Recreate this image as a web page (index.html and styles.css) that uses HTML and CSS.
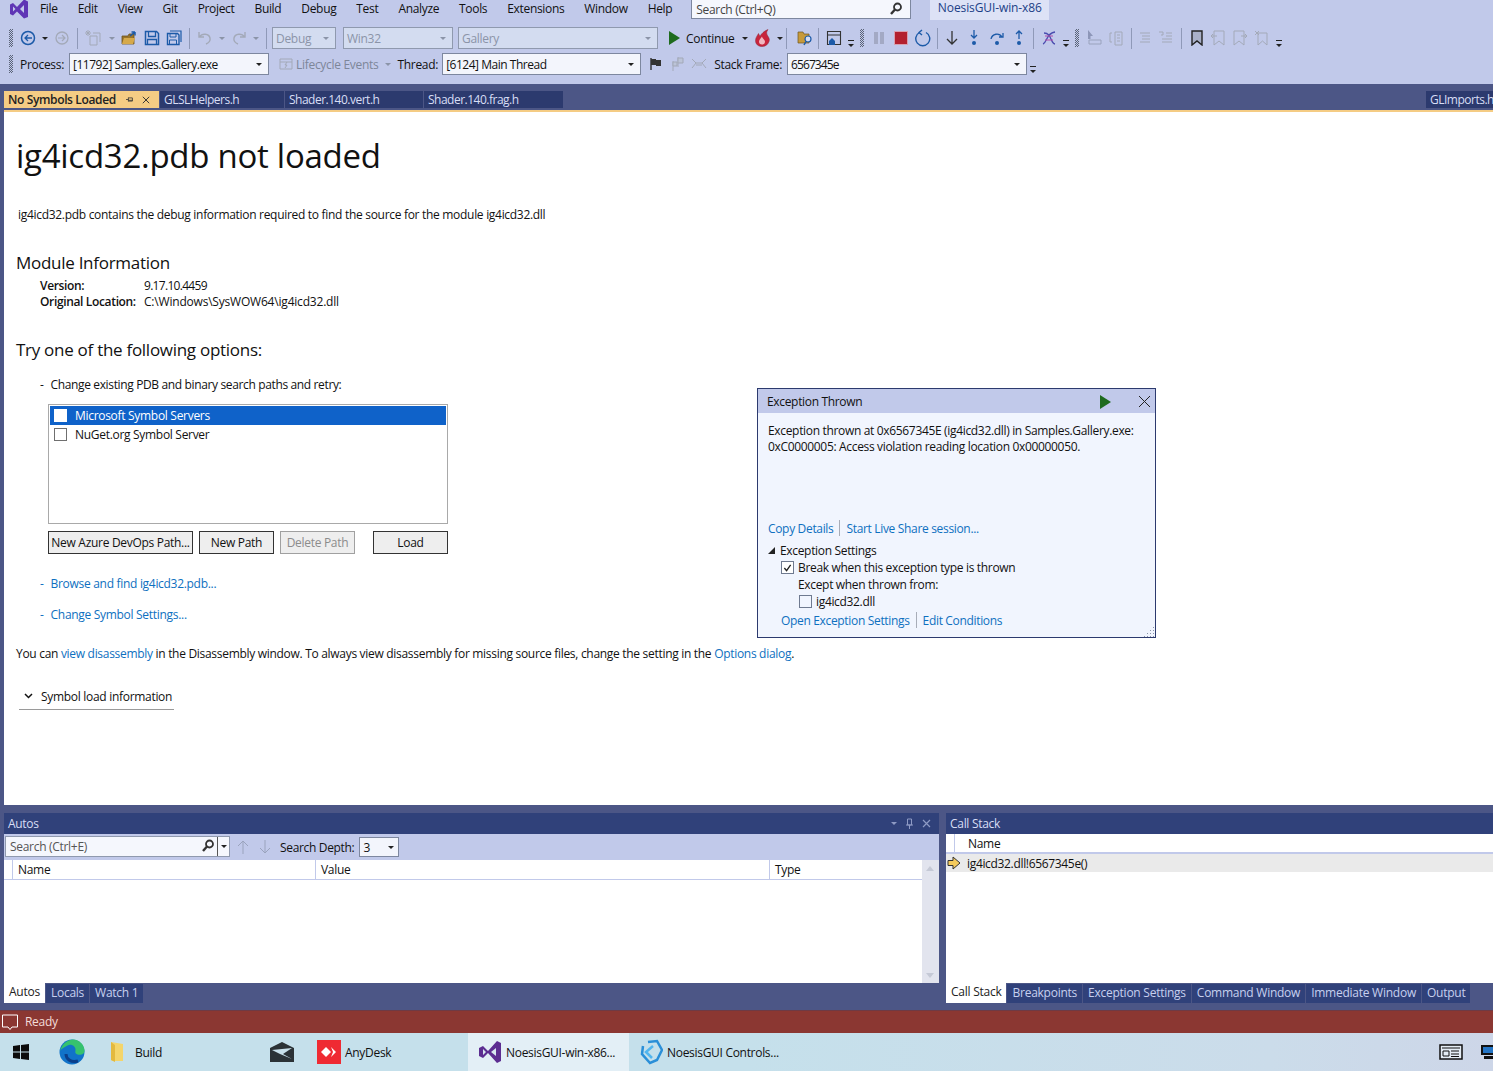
FILE: index.html
```html
<!DOCTYPE html>
<html lang="en">
<head>
  <meta charset="UTF-8" />
  <title>NoesisGUI-win-x86</title>
  <link rel="stylesheet" href="styles.css">
</head>
<body>
  <!-- Menu bar -->
  <div class="menubar">
    <svg class="vs-logo" width="20" height="20" viewBox="0 0 20 20"><path d="M1 5.500l3-1.500 4 4 7-7.500 4 2v15.500l-4 1.500-7-7-4 4-3-1.500z" fill="#5f35b5"/><path d="M4 7.500v5l2.500-2.500zM15 6l-4 4 4 4z" fill="#c1c9ea"/></svg>
    <span class="menu-item">File</span><span class="menu-item">Edit</span><span class="menu-item">View</span><span class="menu-item">Git</span><span class="menu-item">Project</span><span class="menu-item">Build</span><span class="menu-item">Debug</span><span class="menu-item">Test</span><span class="menu-item">Analyze</span><span class="menu-item">Tools</span><span class="menu-item">Extensions</span><span class="menu-item">Window</span><span class="menu-item">Help</span>
    <div class="quick-search"><span>Search (Ctrl+Q)</span>
      <svg width="14" height="14" viewBox="0 0 14 14"><circle cx="8.500" cy="5" r="3.500" fill="none" stroke="#333" stroke-width="1.800"/><path d="M6 7.500L2 12" stroke="#333" stroke-width="2.400"/></svg>
    </div>
    <div class="solution-name">NoesisGUI-win-x86</div>
  </div>

  <!-- Standard toolbar -->
  <div class="toolbar tb-top">
    <i class="grip"></i>
    <svg class="ic" width="16" height="16" viewBox="0 0 16 16"><circle cx="8" cy="8" r="6.500" fill="none" stroke="#1c5aa8" stroke-width="1.500"/><path d="M12 8H5M8 5L5 8l3 3" fill="none" stroke="#1c5aa8" stroke-width="1.300"/></svg>
    <i class="caret c-dark"></i>
    <svg class="ic" width="16" height="16" viewBox="0 0 16 16"><circle cx="8" cy="8" r="6" fill="none" stroke="#a3a9b8" stroke-width="1.300"/><path d="M4 8h7M8 5l3 3-3 3" fill="none" stroke="#a3a9b8" stroke-width="1.200"/></svg>
    <i class="sep"></i>
    <svg class="ic" width="18" height="18" viewBox="0 0 18 18"><path d="M5 7h7v9H5zM8 4h7v9" fill="none" stroke="#a3a9b8"/><path d="M3 1v6M0 4h6M1 2l4 4M5 2L1 6" stroke="#a3a9b8"/></svg>
    <i class="caret c-grey"></i>
    <svg class="ic" width="17" height="16" viewBox="0 0 17 16"><path d="M1 6h6l1-2h5v10H1z" fill="#9a7428" stroke="#6d5320" stroke-width=".8"/><path d="M1 14l2-6h11l-2 6z" fill="#d6a94a"/><path d="M9 6l5-4M14 2v3.500M14 2h-3.500" stroke="#1c5aa8" stroke-width="1.500" fill="none"/></svg>
    <svg class="ic" width="16" height="16" viewBox="0 0 16 16"><path d="M1.500 1.500h11l2 2v11h-13z" fill="none" stroke="#1c5aa8" stroke-width="1.500"/><path d="M4.500 2v4.500h7V2M3.500 14V9.500h9V14" fill="none" stroke="#1c5aa8" stroke-width="1.300"/></svg>
    <svg class="ic" width="16" height="16" viewBox="0 0 16 16"><path d="M4 1h11v11" fill="none" stroke="#1c5aa8" stroke-width="1.200"/><path d="M1.500 3.500h10l1.500 1.500v9.500H1.500z" fill="none" stroke="#1c5aa8" stroke-width="1.400"/><path d="M4 4v3h6V4M3.500 14v-4h7v4" fill="none" stroke="#1c5aa8"/></svg>
    <i class="sep"></i>
    <svg class="ic" width="16" height="16" viewBox="0 0 16 16"><path d="M2 2v5h5M2.500 7C5 3 12 3.500 13 8c.6 3-1.500 5-4 6" fill="none" stroke="#a3a9b8" stroke-width="1.400"/></svg>
    <i class="caret c-grey"></i>
    <svg class="ic" width="16" height="16" viewBox="0 0 16 16"><path d="M14 2v5H9M13.500 7C11 3 4 3.500 3 8c-.6 3 1.500 5 4 6" fill="none" stroke="#a3a9b8" stroke-width="1.400"/></svg>
    <i class="caret c-grey"></i>
    <i class="sep"></i>
    <div class="combo combo-off w-debug">Debug<i class="caret c-grey"></i></div>
    <div class="combo combo-off w-win">Win32<i class="caret c-grey"></i></div>
    <div class="combo combo-off w-gallery">Gallery<i class="caret c-grey"></i></div>
    <svg class="ic play" width="12" height="14" viewBox="0 0 12 14"><path d="M1 0l11 7-11 7z" fill="#1e6b1e"/></svg>
    <span class="tb-text">Continue</span>
    <i class="caret c-dark"></i>
    <svg class="ic" width="18" height="18" viewBox="0 0 18 18"><path d="M8 17.500c-4 0-6.500-2.500-6.500-6 0-3 2-5 3-7l1.500 3c1-2.500 4-5.500 8-7-2 3-1.500 4-.5 6s2.500 3 1.500 6-3.500 5-7 5z" fill="#c8243c" stroke="#8a2a3a" stroke-width=".5"/><path d="M8 15.500c-2 0-3-1-3-3s2-3 3-5c0 2 3 3 3 5s-1 3-3 3z" fill="#f0b8c0"/></svg>
    <i class="caret c-dark c-flame"></i>
    <i class="sep"></i>
    <svg class="ic ic-find" width="16" height="16" viewBox="0 0 16 16"><path d="M1 2h5l1 2h5v9H1z" fill="#c79a3a" stroke="#6d5320" stroke-width=".7"/><circle cx="11" cy="9" r="3" fill="#d5def5" stroke="#1c5aa8" stroke-width="1.200"/><path d="M9 11.500L7 15" stroke="#1c5aa8" stroke-width="1.500"/></svg>
    <i class="sep"></i>
    <svg class="ic" width="16" height="16" viewBox="0 0 16 16"><path d="M1.500 1.500h13v13h-13zM1.500 5h13" fill="none" stroke="#333" stroke-width="1.100"/><path d="M3 11l3-3 3 3v4H3z" fill="#1c5aa8"/></svg>
    <i class="overflow"></i>
    <i class="grip grip-small"></i>
    <svg class="ic ic-pause" width="10" height="12" viewBox="0 0 10 12"><path d="M0 0h4v12H0zM6 0h4v12H6z" fill="#a3a9c4"/></svg>
    <svg class="ic ic-stop" width="14" height="14" viewBox="0 0 14 14"><rect x=".5" y=".5" width="13" height="13" fill="#b3202f" stroke="#d8a0b0"/></svg>
    <svg class="ic ic-restart" width="17" height="18" viewBox="0 0 17 18"><path d="M5.500 3.500a7 7 0 1 0 6.500 0M8 1l-3 2.500 3 2.500" fill="none" stroke="#1c5aa8" stroke-width="1.400"/></svg>
    <i class="sep"></i>
    <svg class="ic" width="14" height="16" viewBox="0 0 14 16"><path d="M7 1v13M2 9l5 5 5-5" fill="none" stroke="#333" stroke-width="1.300"/></svg>
    <svg class="ic ic-into" width="14" height="16" viewBox="0 0 14 16"><path d="M7 0v8M4 5l3 3 3-3" fill="none" stroke="#1c5aa8" stroke-width="1.300"/><circle cx="7" cy="13" r="2" fill="#1c5aa8"/></svg>
    <svg class="ic ic-over" width="16" height="16" viewBox="0 0 16 16"><path d="M2 9a6 6 0 0 1 11-2M14 3v4h-4" fill="none" stroke="#1c5aa8" stroke-width="1.300"/><circle cx="8" cy="13" r="2" fill="#1c5aa8"/></svg>
    <svg class="ic ic-out" width="14" height="16" viewBox="0 0 14 16"><path d="M7 9V1M4 4l3-3 3 3" fill="none" stroke="#1c5aa8" stroke-width="1.300"/><circle cx="7" cy="13" r="2" fill="#1c5aa8"/></svg>
    <i class="sep"></i>
    <svg class="ic" width="16" height="16" viewBox="0 0 16 16"><path d="M2 14C6 13 5 3 14 2M3 3c8 0 6 10 11 11" fill="none" stroke="#4a4daf" stroke-width="1.300"/><path d="M4 6h8M4 10h8" stroke="#b04aa8"/></svg>
    <i class="overflow"></i>
    <i class="grip grip-small"></i>
    <svg class="ic" width="16" height="16" viewBox="0 0 16 16"><path d="M2 0l5 6H4.500v3H2z" fill="#8d96b8"/><path d="M3 10h12v4H3z" fill="none" stroke="#9aa3bd"/></svg>
    <svg class="ic" width="16" height="16" viewBox="0 0 16 16"><path d="M7 2h7v13H7zM9 5h3M9 8h3M9 11h3M4 3H2v9h2" fill="none" stroke="#a3a9b8"/></svg>
    <i class="sep"></i>
    <svg class="ic ic-indent" width="16" height="16" viewBox="0 0 16 16"><path d="M4 3h10M6 6h8M6 9h8M4 12h10" stroke="#a3a9b8"/></svg>
    <svg class="ic ic-unindent" width="16" height="16" viewBox="0 0 16 16"><path d="M8 3h6M8 6h6M4 9h10M4 12h10M1 2h4v3H3" fill="none" stroke="#a3a9b8"/></svg>
    <i class="sep"></i>
    <svg class="ic ic-mark" width="14" height="16" viewBox="0 0 14 16"><path d="M2 1h10v14l-5-4-5 4z" fill="#a9b0c8" stroke="#222" stroke-width="1.400"/></svg>
    <svg class="ic" width="16" height="16" viewBox="0 0 16 16"><path d="M4 1h10v14l-5-4-5 4zM1 6h6M3 4L1 6l2 2" fill="none" stroke="#a3a9b8"/></svg>
    <svg class="ic" width="16" height="16" viewBox="0 0 16 16"><path d="M2 1h10v14l-5-4-5 4zM9 6h6M13 4l2 2-2 2" fill="none" stroke="#a3a9b8"/></svg>
    <svg class="ic" width="16" height="16" viewBox="0 0 16 16"><path d="M4 3h9v12l-4.500-4L4 15zM1 1l4 4M5 1L1 5" fill="none" stroke="#a3a9b8"/></svg>
    <i class="overflow"></i>
  </div>

  <!-- Debug location toolbar -->
  <div class="toolbar tb-debug">
    <i class="grip"></i>
    <span class="tb-text">Process:</span>
    <div class="combo w-process">[11792] Samples.Gallery.exe<i class="caret c-dark"></i></div>
    <svg class="ic ic-life" width="14" height="14" viewBox="0 0 14 14"><path d="M1 2h12v10H1zM1 5h12M8 5L6 8h2l-2 3" fill="none" stroke="#a3a9b8"/></svg>
    <span class="tb-text muted">Lifecycle Events</span>
    <i class="caret c-grey"></i>
    <span class="tb-text t-thread">Thread:</span>
    <div class="combo w-thread">[6124] Main Thread<i class="caret c-dark"></i></div>
    <svg class="ic" width="14" height="14" viewBox="0 0 14 14"><path d="M2 1v12" stroke="#222" stroke-width="1.300"/><path d="M2 2h5v1h5v6H7V8H2z" fill="#333"/></svg>
    <svg class="ic" width="16" height="16" viewBox="0 0 16 16"><path d="M4 5v10M9 1v10" stroke="#a3a9b8"/><path d="M4 6h4v4H4zM9 2h5v5H9z" fill="#bcc4d8" stroke="#a3a9b8"/></svg>
    <svg class="ic" width="16" height="14" viewBox="0 0 16 14"><path d="M1 2l4 4-4 5M15 2l-4 4 4 5M5 6h6M5 8h6" fill="none" stroke="#a3a9b8"/></svg>
    <span class="tb-text t-frame">Stack Frame:</span>
    <div class="combo w-frame">6567345e<i class="caret c-dark"></i></div>
    <i class="overflow"></i>
  </div>

  <div class="workspace">
    <!-- Document tabs -->
    <div class="doc-tabs">
      <div class="doc-tab active"><b>No Symbols Loaded</b>
        <svg width="9" height="9" viewBox="0 0 9 9"><path d="M0 4.500h3M3 2v5M3 2.500h5v4H3M3 5.500h5" fill="none" stroke="#333"/></svg>
        <svg width="10" height="10" viewBox="0 0 10 10"><path d="M1 1l8 8M9 1L1 9" stroke="#333" stroke-width="1.200"/></svg>
      </div>
      <div class="doc-tab w-glsl">GLSLHelpers.h</div>
      <div class="doc-tab w-vert">Shader.140.vert.h</div>
      <div class="doc-tab w-frag">Shader.140.frag.h</div>
      <div class="doc-tab tab-right">GLImports.h</div>
    </div>

    <!-- No symbols page -->
    <div class="document">
      <h1>ig4icd32.pdb not loaded</h1>
      <p class="lead">ig4icd32.pdb contains the debug information required to find the source for the module ig4icd32.dll</p>
      <h2>Module Information</h2>
      <div class="module-info">
        <b>Version:</b><span class="mod-version">9.17.10.4459</span>
        <b>Original Location:</b><span>C:\Windows\SysWOW64\ig4icd32.dll</span>
      </div>
      <h2 class="h-options">Try one of the following options:</h2>
      <div class="option first"><span>-</span><span>Change existing PDB and binary search paths and retry:</span></div>
      <div class="path-list">
        <div class="path-row selected"><i class="box"></i>Microsoft Symbol Servers</div>
        <div class="path-row"><i class="box"></i>NuGet.org Symbol Server</div>
      </div>
      <div class="path-buttons">
        <div class="btn btn-azure">New Azure DevOps Path...</div>
        <div class="btn btn-path">New Path</div>
        <div class="btn btn-path disabled">Delete Path</div>
        <div class="btn btn-path btn-load">Load</div>
      </div>
      <div class="option browse"><a>-</a><a>Browse and find ig4icd32.pdb...</a></div>
      <div class="option change"><a>-</a><a>Change Symbol Settings...</a></div>
      <p class="disasm">You can <a>view disassembly</a> in the Disassembly window. To always view disassembly for missing source files, change the setting in the <a>Options dialog</a>.</p>
      <div class="symbol-load">
        <svg width="9" height="6" viewBox="0 0 9 6"><path d="M1 1l3.500 3.500L8 1" fill="none" stroke="#111" stroke-width="1.500"/></svg>
        <span>Symbol load information</span>
      </div>

      <!-- Exception helper floats over the document -->
      <div class="exception">
        <div class="exc-head"><span>Exception Thrown</span>
          <div class="exc-actions">
            <svg width="11" height="14" viewBox="0 0 11 14"><path d="M0 0l11 7-11 7z" fill="#1e6b1e"/></svg>
            <svg width="13" height="13" viewBox="0 0 13 13"><path d="M1 1l11 11M12 1L1 12" stroke="#222" stroke-width="1"/></svg>
          </div>
        </div>
        <div class="exc-body">
          <p class="exc-msg">Exception thrown at 0x6567345E (ig4icd32.dll) in Samples.Gallery.exe:<br>0xC0000005: Access violation reading location 0x00000050.</p>
          <div class="exc-links"><a>Copy Details</a><i></i><a>Start Live Share session...</a></div>
          <div class="exc-settings"><span class="tri"></span>Exception Settings</div>
          <div class="exc-check"><i class="box checked"><svg width="10" height="10" viewBox="0 0 10 10"><path d="M1.500 5l2.500 3 4.500-6.500" fill="none" stroke="#222" stroke-width="1.500"/></svg></i>Break when this exception type is thrown</div>
          <div class="exc-except">Except when thrown from:</div>
          <div class="exc-module"><i class="box"></i>ig4icd32.dll</div>
          <div class="exc-links bottom"><a>Open Exception Settings</a><i></i><a>Edit Conditions</a></div>
        </div>
        <svg class="resize-grip" width="11" height="11" viewBox="0 0 11 11"><path d="M9 1h1v1H9zM6 4h1v1H6zM9 4h1v1H9zM3 7h1v1H3zM6 7h1v1H6zM9 7h1v1H9zM0 10h1v1H0zM3 10h1v1H3zM6 10h1v1H6zM9 10h1v1H9z" fill="#8a93a8"/></svg>
      </div>
    </div>

    <!-- Tool windows -->
    <div class="tool-windows">
      <div class="pane autos">
        <div class="pane-title"><span>Autos</span>
          <div class="pane-actions">
            <i class="caret c-pane"></i>
            <svg width="9" height="11" viewBox="0 0 9 11"><path d="M2.500 1h4v6h-4zM1 7h7M4.500 7v4" fill="none" stroke="#8e9ac4"/></svg>
            <svg width="9" height="9" viewBox="0 0 9 9"><path d="M1 1l7 7M8 1L1 8" stroke="#8e9ac4" stroke-width="1.200"/></svg>
          </div>
        </div>
        <div class="autos-tools">
          <div class="pane-search"><span>Search (Ctrl+E)</span>
            <svg width="14" height="14" viewBox="0 0 14 14"><circle cx="8.500" cy="5" r="3.500" fill="none" stroke="#333" stroke-width="1.800"/><path d="M6 7.500L2 12" stroke="#333" stroke-width="2.400"/></svg>
            <div class="pane-search-drop"><i class="caret c-dark"></i></div>
          </div>
          <svg class="nav-arrow" width="12" height="14" viewBox="0 0 12 14"><path d="M6 14V1M1 6l5-5 5 5" fill="none" stroke="#9aa3bd"/></svg>
          <svg class="nav-arrow" width="12" height="14" viewBox="0 0 12 14"><path d="M6 0v13M1 8l5 5 5-5" fill="none" stroke="#9aa3bd"/></svg>
          <span class="depth-label">Search Depth:</span>
          <div class="depth-combo">3<i class="caret c-dark"></i></div>
        </div>
        <div class="autos-grid">
          <div class="grid-main">
            <div class="grid-head">
              <div class="gh gh-margin"></div>
              <div class="gh gh-name">Name</div>
              <div class="gh gh-value">Value</div>
              <div class="gh gh-type">Type</div>
            </div>
          </div>
          <div class="scrollbar"><i class="arrow-up"></i><i class="arrow-down"></i></div>
        </div>
        <div class="pane-tabs">
          <div class="pane-tab active">Autos</div><div class="pane-tab">Locals</div><div class="pane-tab">Watch 1</div>
        </div>
      </div>
      <div class="pane stack">
        <div class="pane-title"><span>Call Stack</span></div>
        <div class="stack-grid">
          <div class="grid-head stack-head">
            <div class="gh gh-margin"></div>
            <div class="gh">Name</div>
          </div>
          <div class="stack-row">
            <svg width="14" height="14" viewBox="0 0 14 14"><path d="M1 4.500h5V1l7 6-7 6V9.500H1z" fill="#f5cb5c" stroke="#333"/></svg>
            ig4icd32.dll!6567345e()
          </div>
        </div>
        <div class="pane-tabs">
          <div class="pane-tab active">Call Stack</div><div class="pane-tab">Breakpoints</div><div class="pane-tab">Exception Settings</div><div class="pane-tab">Command Window</div><div class="pane-tab">Immediate Window</div><div class="pane-tab">Output</div>
        </div>
      </div>
    </div>
  </div>

  <!-- Status bar -->
  <div class="statusbar">
    <svg width="18" height="18" viewBox="0 0 18 18"><path d="M1.500 2h15v12H11l-2 2.500L7 14H1.500z" fill="none" stroke="#fff" stroke-width="1"/></svg>
    <span>Ready</span>
  </div>

  <!-- Windows taskbar -->
  <div class="taskbar">
    <svg class="tb-win" width="16" height="16" viewBox="0 0 16 16"><path d="M0 2l7-1v6.500H0zM8 1l8-1v7.500H8zM0 8.500h7V15l-7-1zM8 8.500h8V16l-8-1z" fill="#0c0c0c"/></svg>
    <svg class="tb-edge" width="26" height="26" viewBox="0 0 26 26"><circle cx="13" cy="13" r="12.500" fill="#1173c9"/><path d="M1 12C3 4 10 .5 14 .5c7 0 11.500 6 11.500 11 0 4-4 5-7 4-3-1-2-3-2-5 0-3-4-6-8-4-3 1.500-6 3-7.500 5.500z" fill="#36c26e"/><path d="M7 15c0 5 5 9 12 7" fill="none" stroke="#0b3f8a" stroke-width="3"/></svg>
    <div class="task task-build">
      <svg width="14" height="22" viewBox="0 0 14 22"><path d="M1 1l12 2v17H3l-2-1z" fill="#f4d56a"/><path d="M1 1l4 3v17l-4-2z" fill="#e3b93e"/></svg>
      <span>Build</span>
    </div>
    <svg class="tb-mail" width="24" height="20" viewBox="0 0 24 20"><path d="M0 6l12-6 12 6v14H0z" fill="#2b3236"/><path d="M2 8l20-2-9 6 9 5-12-5z" fill="#c8e0ea"/></svg>
    <div class="task task-any">
      <div class="any-logo"><svg width="18" height="12" viewBox="0 0 18 12"><path d="M6 1l5 5-5 5-5-5z" fill="#fff"/><path d="M11 1l5 5-5 5 2-5z" fill="#fff"/></svg></div>
      <span>AnyDesk</span>
    </div>
    <div class="task task-vs">
      <svg width="24" height="24" viewBox="0 0 24 24"><path d="M1 8l4-2 5 5 9-10 4 2v18l-4 2-9-10-5 5-4-2z" fill="#5c2d91"/><path d="M5 9v6l3-3zM18 8l-5 4 5 4z" fill="#d8e8f0"/></svg>
      <span>NoesisGUI-win-x86...</span>
    </div>
    <div class="task task-noesis">
      <svg width="24" height="26" viewBox="0 0 24 26"><path d="M9 3l9-1 5 9-5 10-7 3L3 15l1-8" fill="none" stroke="#2a8fd8" stroke-width="2.500"/><path d="M14 7l-7 6 6 6" fill="none" stroke="#52b5ee" stroke-width="2.500"/></svg>
      <span>NoesisGUI Controls...</span>
    </div>
    <div class="tray">
      <svg width="24" height="16" viewBox="0 0 24 16"><path d="M1 1h22v14H1z" fill="#e4ecf4" stroke="#111" stroke-width="1.500"/><path d="M3 4h18" stroke="#111"/><path d="M4 7h6v5H4z" fill="none" stroke="#111"/><path d="M12 7h8M12 10h8M12 12.500h8" stroke="#111"/></svg>
      <svg width="12" height="16" viewBox="0 0 12 16"><path d="M0 1h12v10H0z" fill="#111"/><path d="M2 3h10v6H2z" fill="#2474c4"/><path d="M3 12h9v3H3z" fill="#111"/></svg>
    </div>
  </div>
</body>
</html>
```

FILE: styles.css
```css
/* Shared styles */
* {
  margin: 0;
  padding: 0;
  box-sizing: border-box;
}

html, body {
  width: 1493px;
  height: 1071px;
  overflow: hidden;
}

body {
  display: flex;
  flex-direction: column;
  background: #4c5686;
  color: #111;
  font-family: "Open Sans", "Noto Sans", sans-serif;
  font-size: 12px;
  letter-spacing: -0.3px;
}

a {
  color: #0e70c0;
}

i {
  display: block;
  font-style: normal;
}

/* Menu bar */
.menubar {
  height: 24px;
  flex: none;
  display: flex;
  align-items: flex-start;
  background: #c1c9ea;
  padding-left: 9px;
  overflow: hidden;
  letter-spacing: -0.33px;
}

.vs-logo {
  margin-right: 1px;
  margin-top: -1px;
}

.menu-item {
  padding: 0 10px;
  line-height: 17px;
}

.quick-search {
  width: 220px;
  height: 20px;
  margin-left: 9px;
  margin-top: -1px;
  padding: 0 7px 0 4px;
  display: flex;
  justify-content: space-between;
  align-items: center;
  background: #f5f7fd;
  border: 1px solid #7d879f;
  color: #444;
}

.solution-name {
  width: 119px;
  height: 21px;
  margin-left: 19px;
  margin-top: -1px;
  background: #dde2f6;
  color: #1c3f86;
  line-height: 18px;
  text-align: center;
  letter-spacing: -0.1px;
}

/* Toolbars */
.toolbar {
  flex: none;
  display: flex;
  align-items: center;
  background: #c1c9ea;
  padding-left: 9px;
}

.tb-top {
  height: 28px;
}

.tb-debug {
  height: 32px;
  padding-bottom: 8px;
}

.grip {
  width: 4px;
  height: 18px;
  margin-right: 4px;
  background: conic-gradient(#5b6478 25%, transparent 0 50%, #5b6478 0 75%, transparent 0) 0 0 / 2px 2px;
}

.tb-debug .grip {
  margin-right: 7px;
}

.grip-small {
  margin: 0 4px 0 3px;
}

.ic {
  flex: none;
  margin: 0 3px;
}

.ic-find { margin: 0 1px 0 6px; }
.ic-pause { margin-left: 6px; }
.ic-stop { margin-left: 7px; }
.ic-restart { margin: 0 2px 0 3px; }
.ic-into { margin-left: 5px; }
.ic-over { margin-left: 5px; }
.ic-out { margin-left: 4px; }
.ic-indent { margin-left: 0; }
.ic-unindent { margin-right: 3px; }
.ic-mark { margin-left: 4px; }
.ic-life { margin-left: 6px; }

.sep {
  width: 1px;
  height: 21px;
  margin: 0 4px;
  background: #8f99b8;
}

.caret {
  width: 0;
  height: 0;
  flex: none;
  margin: 0 3px;
  border-left: 3px solid transparent;
  border-right: 3px solid transparent;
  border-top: 3px solid #222;
}

.c-grey {
  border-top-color: #8b94a8;
}

.c-pane {
  margin: 0;
  border-top-color: #8e9ac4;
}

.c-flame {
  margin: 0 -1px 0 2px;
}

.overflow {
  width: 6px;
  height: 7px;
  margin: 11px 3px 0;
  flex: none;
  border-top: 1px solid #222;
  position: relative;
}

.overflow::after {
  content: "";
  position: absolute;
  left: 0;
  top: 3px;
  border-left: 3px solid transparent;
  border-right: 3px solid transparent;
  border-top: 3px solid #222;
}

.combo {
  flex: none;
  height: 22px;
  padding: 0 3px;
  display: flex;
  justify-content: space-between;
  align-items: center;
  background: #f3f5fc;
  border: 1px solid #7d879f;
  letter-spacing: -0.48px;
}

.combo-off {
  background: #d3dcf0;
  border-color: #8f99ae;
  color: #8b94a8;
  margin-right: 5px;
  letter-spacing: -0.3px;
}

.w-debug { width: 64px; margin-left: 1px; margin-right: 7px; }
.w-win { width: 110px; }
.w-gallery { width: 200px; margin-right: 7px; }
.w-process { width: 200px; margin: 0 4px 0 5px; }
.w-thread { width: 199px; margin-left: 4px; margin-right: 5px; }
.w-frame { width: 240px; margin-left: 5px; letter-spacing: -0.9px; }

.tb-text {
  flex: none;
}

.tb-text + .caret {
  margin-left: 7px;
}

.t-thread { margin-left: 3px; }
.t-frame { margin-left: 4px; }

.muted {
  color: #7d8699;
}

.play {
  margin: 0 6px 0 3px;
}

/* Document area */
.workspace {
  flex: 1;
  min-height: 0;
  display: flex;
  flex-direction: column;
  padding-left: 4px;
}

.doc-tabs {
  height: 26px;
  flex: none;
  display: flex;
  align-items: flex-end;
  padding-bottom: 2px;
  position: relative;
}

.doc-tab {
  height: 17px;
  padding: 0 0 0 4px;
  margin-right: 1px;
  background: #2c3a6e;
  color: #d8def5;
  line-height: 18px;
  letter-spacing: -0.5px;
  white-space: nowrap;
  overflow: hidden;
}

.doc-tab.active {
  width: 155px;
  display: flex;
  align-items: center;
  background: #f5cc84;
  color: #222;
}

.doc-tab.active b {
  font-weight: 600;
  letter-spacing: -0.37px;
  margin-right: 10px;
}

.doc-tab.active svg {
  margin-right: 9px;
}

.w-glsl { width: 124px; }
.w-vert { width: 138px; }
.w-frag { width: 139px; }

.tab-right {
  margin: 0 0 0 auto;
  width: 67px;
}

.document {
  height: 695px;
  flex: none;
  position: relative;
  background: #fff;
  border-top: 2px solid #f5cc84;
  padding: 22px 0 0 12px;
}

h1 {
  font-size: 33px;
  font-weight: 400;
  line-height: 44px;
  letter-spacing: -0.27px;
}

h2 {
  font-size: 17px;
  font-weight: 400;
  line-height: 22px;
  letter-spacing: -0.28px;
}

.lead {
  margin: 29px 0 0 2px;
  line-height: 16px;
}

.lead + h2 {
  margin-top: 29px;
}

.module-info {
  display: grid;
  grid-template-columns: 104px auto;
  justify-content: start;
  margin: 4px 0 0 24px;
  line-height: 16px;
  letter-spacing: -0.2px;
}

.module-info b {
  font-weight: 600;
  letter-spacing: -0.35px;
  white-space: nowrap;
}

.module-info .mod-version {
  letter-spacing: -0.7px;
}

.h-options {
  margin-top: 29px;
}

.option {
  display: flex;
  gap: 7px;
  margin-left: 24px;
  line-height: 16px;
}

.first {
  letter-spacing: -0.36px;
  margin-top: 16px;
}

.path-list {
  width: 400px;
  height: 120px;
  margin: 11px 0 0 32px;
  padding: 1px;
  background: #fff;
  border: 1px solid #a9a9a9;
}

.path-row {
  height: 19px;
  display: flex;
  align-items: center;
  padding-left: 4px;
}

.path-row.selected {
  background: #0f62c9;
  color: #fff;
}

.box {
  width: 13px;
  height: 13px;
  flex: none;
  margin-right: 8px;
  background: #fff;
  border: 1px solid #6f6f6f;
}

.selected .box {
  border-color: #fff;
}

.path-buttons {
  display: flex;
  margin: 7px 0 0 32px;
  color: #111;
}

.btn {
  height: 23px;
  background: #eeeeee;
  border: 1px solid #333;
  line-height: 21px;
  text-align: center;
  white-space: nowrap;
}

.btn-azure {
  width: 145px;
  margin-right: 6px;
}

.btn-path {
  width: 75px;
  margin-right: 6px;
}

.btn.disabled {
  border-color: #a0a0a0;
  color: #8c8c8c;
}

.btn-load {
  margin-left: 12px;
  margin-right: 0;
}

.browse {
  margin-top: 22px;
}

.change {
  margin-top: 15px;
}

.disasm {
  margin-top: 23px;
  line-height: 16px;
}

.symbol-load {
  width: 155px;
  height: 25px;
  margin: 23px 0 0 3px;
  padding: 3px 0 0 5px;
  display: flex;
  align-items: flex-start;
  gap: 8px;
  border-bottom: 1px solid #9a9a9a;
  line-height: 17px;
  white-space: nowrap;
}

.symbol-load svg {
  margin-top: 5px;
}

/* Exception helper */
.exception {
  position: absolute;
  left: 753px;
  top: 276px;
  width: 399px;
  height: 250px;
  background: #f1f5fe;
  border: 1px solid #2c3a6e;
  display: flex;
  flex-direction: column;
  letter-spacing: -0.33px;
}

.exc-head {
  height: 24px;
  flex: none;
  padding: 1px 4px 0 9px;
  display: flex;
  justify-content: space-between;
  align-items: center;
  background: #c1c9ea;
}

.exc-actions {
  display: flex;
  align-items: center;
  gap: 27px;
}

.exc-body {
  flex: 1;
  padding: 10px 10px 0;
}

.exc-msg {
  height: 97px;
  line-height: 16px;
}

.exc-links {
  display: flex;
  align-items: center;
  height: 16px;
}

.exc-links i {
  width: 1px;
  height: 16px;
  margin: 0 6px;
  background: #a8adb8;
}

.exc-settings {
  margin-top: 6px;
  line-height: 17px;
  display: flex;
  align-items: center;
}

.tri {
  width: 0;
  height: 0;
  margin-right: 5px;
  border-left: 7px solid transparent;
  border-bottom: 7px solid #222;
}

.exc-check, .exc-module {
  margin-left: 13px;
  height: 17px;
  display: flex;
  align-items: center;
}

.exc-check .box {
  margin-right: 4px;
  border-color: #6f7a90;
  padding: 1px;
  display: flex;
}

.exc-except {
  margin-left: 30px;
  line-height: 17px;
}

.exc-module {
  margin-left: 31px;
}

.exc-module .box {
  margin-right: 4px;
  background: transparent;
  border-color: #6f7a90;
}

.exc-links.bottom {
  margin: 2px 0 0 13px;
}

.resize-grip {
  position: absolute;
  right: 0;
  bottom: 0;
}

/* Tool windows */
.tool-windows {
  flex: 1;
  min-height: 0;
  display: flex;
  padding-top: 8px;
}

.pane {
  display: flex;
  flex-direction: column;
}

.autos {
  width: 935px;
  margin-right: 7px;
}

.stack {
  flex: 1;
  min-width: 0;
}

.pane-title {
  height: 21px;
  flex: none;
  padding: 0 8px 0 4px;
  display: flex;
  justify-content: space-between;
  align-items: center;
  background: #30417a;
  color: #d8def5;
}

.pane-actions {
  display: flex;
  align-items: center;
  gap: 8px;
}

.autos-tools {
  height: 26px;
  flex: none;
  display: flex;
  align-items: center;
  background: #c1c9ea;
}

.pane-search {
  width: 225px;
  height: 21px;
  flex: none;
  margin-left: 1px;
  margin-top: -2px;
  padding-left: 4px;
  display: flex;
  align-items: center;
  background: #f5f7fd;
  border: 1px solid #8f99ae;
  color: #555;
}

.pane-search span {
  flex: 1;
}

.pane-search-drop {
  width: 12px;
  height: 19px;
  margin-left: 2px;
  display: flex;
  align-items: center;
  border-left: 1px solid #555;
}

.nav-arrow {
  margin-left: 7px;
}

.nav-arrow + .nav-arrow {
  margin-left: 10px;
}

.depth-label {
  margin-left: 9px;
  flex: none;
  letter-spacing: -0.33px;
}

.depth-combo {
  width: 40px;
  height: 20px;
  margin-left: 5px;
  padding: 0 1px 0 3px;
  display: flex;
  justify-content: space-between;
  align-items: center;
  background: #f3f5fc;
  border: 1px solid #7d879f;
}

.autos-grid {
  flex: 1;
  min-height: 0;
  display: flex;
  background: #fff;
}

.grid-main {
  flex: 1;
}

.grid-head {
  height: 20px;
  display: flex;
  border-bottom: 1px solid #c1c9ea;
  background: #fff;
}

.gh {
  padding-left: 5px;
  line-height: 19px;
  border-right: 1px solid #c1c9ea;
}

.gh-margin { width: 9px; padding: 0; }
.gh-name { width: 303px; }
.gh-value { width: 454px; }
.gh-type { flex: 1; border-right: 0; }

.scrollbar {
  width: 17px;
  position: relative;
  background: #e2e4ee;
}

.arrow-up, .arrow-down {
  position: absolute;
  left: 4px;
  width: 0;
  height: 0;
  border-left: 4px solid transparent;
  border-right: 4px solid transparent;
}

.arrow-up {
  top: 6px;
  border-bottom: 5px solid #c5c9d6;
}

.arrow-down {
  bottom: 5px;
  border-top: 5px solid #c5c9d6;
}

.pane-tabs {
  height: 27px;
  flex: none;
  display: flex;
  align-items: flex-start;
  gap: 1px;
  padding-bottom: 7px;
}

.pane-tab {
  height: 19px;
  margin-top: 1px;
  padding: 0 5px;
  background: #30417a;
  color: #c7d0ef;
  line-height: 18px;
  letter-spacing: -0.25px;
}

.pane-tab.active {
  height: 20px;
  margin-top: 0;
  background: #fff;
  color: #222;
}

.stack-grid {
  flex: 1;
  min-height: 0;
  background: #fff;
}

.stack-head {
  height: 20px;
  border-bottom: 2px solid #c1c9ea;
}

.stack-head .gh {
  border-right: 0;
  line-height: 19px;
}

.stack-head .gh-margin {
  width: 9px;
  border-right: 1px solid #c1c9ea;
  margin-right: 13px;
}

.stack-head .gh:last-child {
  padding-left: 0;
}

.stack-row {
  height: 18px;
  display: flex;
  align-items: center;
  gap: 6px;
  padding-left: 1px;
  background: #eaeaea;
  letter-spacing: -0.33px;
}

/* Bottom bars */
.statusbar {
  height: 23px;
  flex: none;
  display: flex;
  align-items: center;
  gap: 6px;
  background: #8b3732;
  border-top: 1px solid #6e3a44;
  color: #f3dcd9;
  padding: 0 0 1px 1px;
}

.taskbar {
  height: 38px;
  flex: none;
  display: flex;
  align-items: center;
  background: linear-gradient(90deg, #c5e0eb 0%, #c5e0eb 50%, #cbdcea 85%, #cdd6e8 100%);
  font-size: 12px;
  color: #111;
}

.tb-win { margin-left: 13px; }
.tb-edge { margin-left: 30px; }

.task {
  height: 38px;
  display: flex;
  align-items: center;
  flex: none;
}

.task-build {
  margin-left: 25px;
  gap: 11px;
  width: 160px;
}

.tb-mail { flex: none; }

.task-any {
  margin-left: 23px;
  width: 151px;
  gap: 4px;
}

.any-logo {
  width: 24px;
  height: 24px;
  display: flex;
  align-items: center;
  justify-content: center;
  background: #ef2a32;
}

.task-vs {
  width: 161px;
  padding-left: 10px;
  gap: 4px;
  background: #e3eff6;
}

.task-noesis {
  padding-left: 10px;
  gap: 4px;
}

.tray {
  margin-left: auto;
  display: flex;
  gap: 18px;
  align-items: center;
}
```
